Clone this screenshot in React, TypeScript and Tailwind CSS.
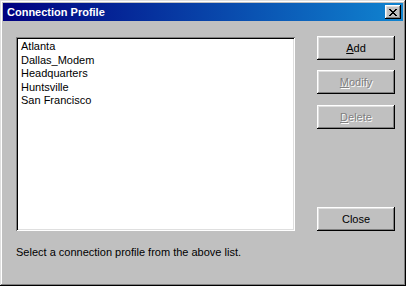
import React from "react";

const raised =
  "shadow-[inset_-1px_-1px_#000000,inset_1px_1px_#ffffff,inset_-2px_-2px_#808080,inset_2px_2px_#dfdfdf]";

function Btn({
  children,
  disabled,
  className = "",
}: {
  children: React.ReactNode;
  disabled?: boolean;
  className?: string;
}) {
  return (
    <div
      className={`w-[78px] h-[24px] bg-[#c0c0c0] flex items-center justify-center text-[11px] ${raised} ${
        disabled ? "text-[#808080] [text-shadow:1px_1px_0_#ffffff]" : "text-black"
      } ${className}`}
    >
      {children}
    </div>
  );
}

export default function App() {
  const items = ["Atlanta", "Dallas_Modem", "Headquarters", "Huntsville", "San Francisco"];
  return (
    <div
      className="w-[409px] h-[290px] bg-white"
      style={{ fontFamily: '"Liberation Sans", Arial, sans-serif' }}
    >
      <div className="w-[406px] h-[286px] bg-[#c0c0c0] p-[3px] flex flex-col shadow-[inset_-1px_-1px_#000000,inset_1px_1px_#dfdfdf,inset_-2px_-2px_#808080,inset_2px_2px_#ffffff]">
        <div className="h-[18px] flex items-center justify-between pl-[4px] pr-[2px] bg-[linear-gradient(to_right,#000080,#1084d0)]">
          <span className="text-white font-bold text-[11px] leading-none">Connection Profile</span>
          <div
            className={`w-[16px] h-[14px] bg-[#c0c0c0] flex items-center justify-center ${raised}`}
          >
            <svg width="8" height="7" viewBox="0 0 8 7">
              <path
                d="M0 0h2v1h1v1h2V1h1V0h2v1H7v1H6v1H5v1h1v1h1v1h1v1H6V6H5V5H3v1H2v1H0V6h1V5h1V4h1V3H2V2H1V1H0z"
                fill="#000"
              />
            </svg>
          </div>
        </div>
        <div className="flex pl-[13px] pt-[16px]">
          <div className="flex flex-col">
            <div className="w-[279px] h-[194px] bg-white pt-[3px] pl-[5px] shadow-[inset_1px_1px_#808080,inset_-1px_-1px_#ffffff,inset_2px_2px_#000000,inset_-2px_-2px_#dfdfdf]">
              {items.map((it) => (
                <div key={it} className="text-[11px] leading-[13.5px] text-black">
                  {it}
                </div>
              ))}
            </div>
            <div className="mt-[16px] text-[11px] text-black leading-none">
              Select a connection profile from the above list.
            </div>
          </div>
          <div className="flex flex-col ml-[22px] -mt-[1px]">
            <Btn>
              <span>
                <span className="underline">A</span>dd
              </span>
            </Btn>
            <Btn disabled className="mt-[10px]">
              <span>
                <span className="underline">M</span>odify
              </span>
            </Btn>
            <Btn disabled className="mt-[11px]">
              <span>
                <span className="underline">D</span>elete
              </span>
            </Btn>
            <Btn className="mt-[78px]">Close</Btn>
          </div>
        </div>
      </div>
    </div>
  );
}
